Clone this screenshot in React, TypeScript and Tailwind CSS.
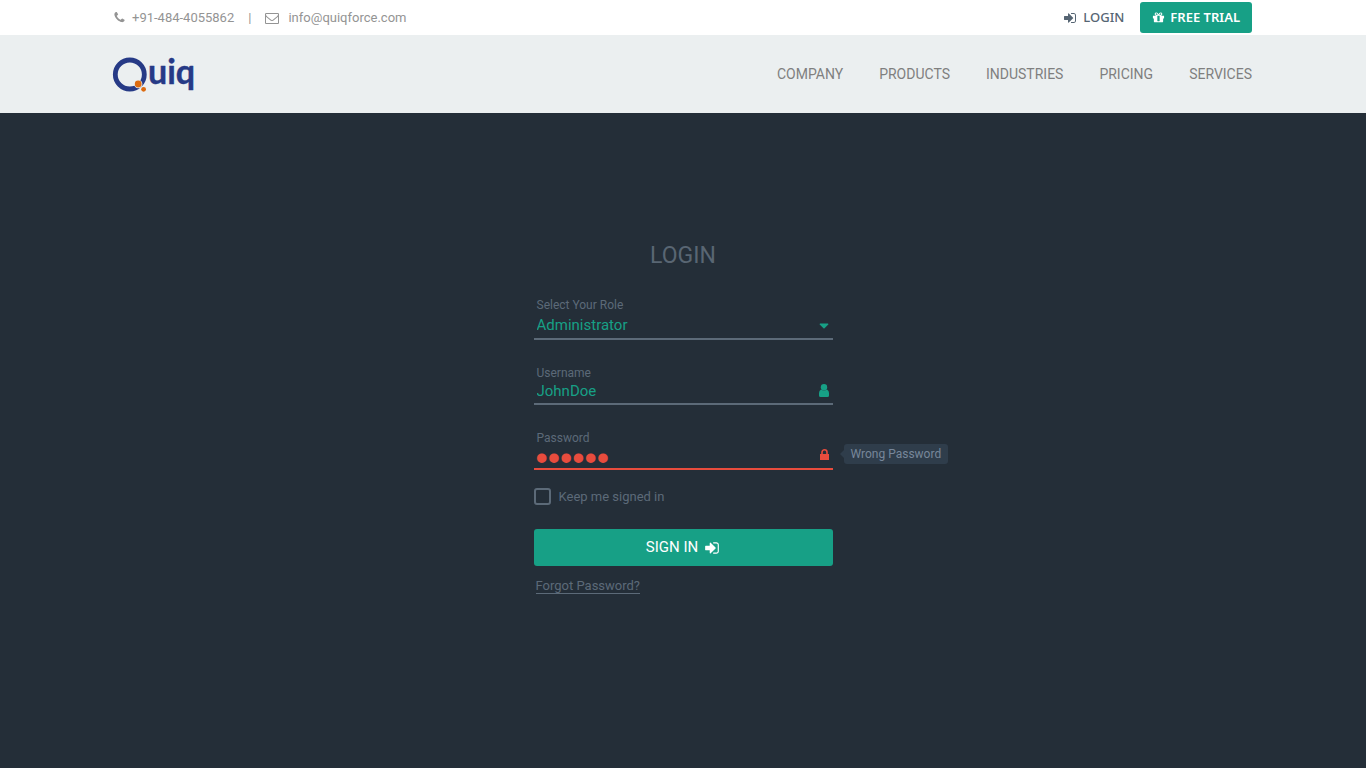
import React from "react";

type IconProps = { path: string; className: string };

function Icon({ path, className }: IconProps) {
  return (
    <svg viewBox="0 0 1792 1792" fill="currentColor" aria-hidden="true" className={className}>
      <path d={path} />
    </svg>
  );
}

const PHONE =
  "M1600 1240q0 27-10 70.5t-21 68.5q-21 50-122 106-94 51-186 51-27 0-53-3.5t-57.5-12.5-47-14.5-55.5-20.5-49-18q-98-35-175-83-127-79-264-216t-216-264q-48-77-83-175-3-9-18-49t-20.5-55.5-14.5-47-12.5-57.5-3.5-53q0-92 51-186 56-101 106-122 25-11 68.5-21t70.5-10q14 0 21 3 18 6 53 76 11 19 30 54t35 63.5 31 53.5q3 4 17.5 25t21.5 35.5 7 28.5q0 20-28.5 50t-62 55-62 53-28.5 46q0 9 5 22.5t8.5 20.5 14 24 11.5 19q76 137 174 235t235 174q2 1 19 11.5t24 14 20.5 8.5 22.5 5q18 0 46-28.5t53-62 55-62 50-28.5q14 0 28.5 7t35.5 21.5 25 17.5q25 15 53.5 31t63.5 35 54 30q70 35 76 53 3 7 3 21z";
const ENVELOPE =
  "M1664 1504v-768q-32 36-69 66-268 206-426 338-51 43-83 67t-86.5 48.5-102.5 24.5h-2q-48 0-102.5-24.5t-86.5-48.5-83-67q-158-132-426-338-37-30-69-66v768q0 13 9.5 22.5t22.5 9.5h1472q13 0 22.5-9.5t9.5-22.5zm0-1051v-24.5l-.5-13-3-12.5-5.5-9-9-7.5-14-2.5h-1472q-13 0-22.5 9.5t-9.5 22.5q0 168 147 284 193 152 401 317 6 5 35 29.5t46 37.5 44.5 31.5 50.5 27.5 43 9h2q20 0 43-9t50.5-27.5 44.5-31.5 46-37.5 35-29.5q208-165 401-317 54-43 100.5-115.5t46.5-131.5zm128-37v1088q0 66-47 113t-113 47h-1472q-66 0-113-47t-47-113v-1088q0-66 47-113t113-47h1472q66 0 113 47t47 113z";
const SIGN_IN =
  "M1312 896q0 26-19 45l-544 544q-19 19-45 19t-45-19-19-45v-288h-448q-26 0-45-19t-19-45v-384q0-26 19-45t45-19h448v-288q0-26 19-45t45-19 45 19l544 544q19 19 19 45zm352-352v704q0 119-84.5 203.5t-203.5 84.5h-320q-13 0-22.5-9.5t-9.5-22.5q0-4-1-20t-.5-26.5 3-23.5 10-19.5 20.5-6.5h320q66 0 113-47t47-113v-704q0-66-47-113t-113-47h-312l-11.5-1-11.5-3-8-5.5-7-9-2-13.5q0-4-1-20t-.5-26.5 3-23.5 10-19.5 20.5-6.5h320q119 0 203.5 84.5t84.5 203.5z";
const GIFT =
  "M1055 1356v-716h-320v716q0 25 18 38.5t46 13.5h192q28 0 46-13.5t18-38.5zm-456-844h195l-126-161q-26-31-69-31-40 0-68 28t-28 68 28 68 68 28zm688-96q0-40-28-68t-68-28q-43 0-69 31l-125 161h194q40 0 68-28t28-68zm376 256v320q0 14-9 23t-23 9h-96v416q0 40-28 68t-68 28h-1088q-40 0-68-28t-28-68v-416h-96q-14 0-23-9t-9-23v-320q0-14 9-23t23-9h440q-93 0-158.5-65.5t-65.5-158.5 65.5-158.5 158.5-65.5q107 0 168 77l128 165 128-165q61-77 168-77 93 0 158.5 65.5t65.5 158.5-65.5 158.5-158.5 65.5h440q14 0 23 9t9 23z";

function Logo() {
  return (
    <svg viewBox="0 0 88 48" className="h-12 w-[88px] overflow-visible" role="img" aria-label="Quiq">
      <circle cx="16.800" cy="24.500" r="14.500" fill="none" stroke="#263a86" strokeWidth="4.800" />
      <text
        x="35"
        y="34"
        fill="#263a86"
        stroke="#263a86"
        strokeWidth="0.4"
        strokeLinejoin="round"
        className="font-['Lato',sans-serif] text-[34px] font-bold leading-none"
      >
        uiq
      </text>
      <circle cx="25.200" cy="34" r="4.200" fill="#ebeff0" />
      <circle cx="25.200" cy="34" r="3.400" fill="#dc6b10" />
      <circle cx="30.600" cy="39.300" r="3.200" fill="#ebeff0" />
      <circle cx="30.600" cy="39.300" r="2.400" fill="#dc6b10" />
    </svg>
  );
}

const NAV = ["Company", "Products", "Industries", "Pricing", "Services"];
const LABEL = "block text-xs leading-4 px-[3px] text-[#5c6a78]";

export default function App() {
  return (
    <div className="flex min-h-screen flex-col bg-[#242e38] font-['Roboto',sans-serif]">
      <div className="bg-white">
        <div className="mx-auto flex h-[35px] max-w-[1140px] items-center justify-between pr-px">
          <div className="flex items-center text-[13px] text-[#949494]">
            <a href="tel:+914844055862" className="flex items-center gap-[6px]">
              <Icon path={PHONE} className="size-[13px]" />
              +91-484-4055862
            </a>
            <span className="mx-[14px]">|</span>
            <a href="mailto:info@quiqforce.com" className="flex items-center gap-[9px]">
              <Icon path={ENVELOPE} className="size-[14px]" />
              info@quiqforce.com
            </a>
          </div>
          <div className="flex items-center gap-4 font-['Noto_Sans',sans-serif] text-[13px]">
            <a href="#login" className="flex items-center gap-[6px] font-medium text-[#566573]">
              <Icon path={SIGN_IN} className="size-[14px]" />
              LOGIN
            </a>
            <a
              href="#trial"
              className="flex h-[31px] items-center gap-[5px] rounded-[3px] bg-[#17a086] px-3 font-semibold text-white"
            >
              <Icon path={GIFT} className="size-[13px]" />
              FREE TRIAL
            </a>
          </div>
        </div>
      </div>

      <header className="bg-[#ebeff0]">
        <div className="mx-auto flex h-[78px] max-w-[1140px] items-center justify-between pr-px">
          <a href="#home">
            <Logo />
          </a>
          <nav className="flex gap-9 text-sm uppercase text-[#7f7f7f]">
            {NAV.map((item) => (
              <a key={item} href={"#" + item.toLowerCase()}>
                {item}
              </a>
            ))}
          </nav>
        </div>
      </header>

      <main className="mx-auto w-[299px] pt-[127px]">
        <h1 className="text-center text-[23px] font-normal leading-8 text-[#596673]">
          LOGIN
        </h1>
        <form className="pt-[25px]" onSubmit={(e) => e.preventDefault()}>
          <label htmlFor="role" className={LABEL}>
            Select Your Role
          </label>
          <div className="flex items-center border-b-2 border-[#5c6a78] pr-1 text-[#17a086]">
            <select
              id="role"
              className="h-[25px] grow appearance-none bg-transparent pl-[3px] text-[15px] outline-none"
            >
              <option>Administrator</option>
            </select>
            <svg viewBox="0 0 10 6" fill="currentColor" aria-hidden="true" className="h-[6px] w-[10px] shrink-0">
              <path d="M1 .5h8l.5.8L5.500 5.300Q5 5.700 4.500 5.300L.5 1.300z" />
            </svg>
          </div>

          <label htmlFor="username" className={LABEL + " mt-[25px]"}>
            Username
          </label>
          <div className="flex items-center border-b-2 border-[#5c6a78] pr-1 text-[#17a086]">
            <input
              id="username"
              type="text"
              defaultValue="JohnDoe"
              className="h-[22px] min-w-0 grow bg-transparent pb-[2px] pl-[3px] text-[15px] outline-none"
            />
            <svg viewBox="0 0 10 13" fill="currentColor" aria-hidden="true" className="mb-[3px] h-[13px] w-[10px] shrink-0">
              <circle cx="5" cy="3.200" r="3.200" />
              <path d="M2 5.500Q5 7.500 8 5.500 10 6.500 10 9v2.500Q10 13 8.500 13h-7Q0 13 0 11.500V9Q0 6.500 2 5.500z" />
            </svg>
          </div>

          <label htmlFor="password" className={LABEL + " mt-[25px]"}>
            Password
          </label>
          <div className="relative flex items-center border-b-2 border-[#e84c3d] pr-1 text-[#e84c3d]">
            <input
              id="password"
              type="password"
              defaultValue="secret"
              aria-describedby="password-error"
              className="h-[22px] min-w-0 grow bg-transparent pl-[2px] pt-[2px] font-['Liberation_Sans',sans-serif] text-[35px] outline-none"
            />
            <svg viewBox="0 0 9 11" aria-hidden="true" className="mb-[5px] h-[11px] w-[9px] shrink-0">
              <path d="M2 6V3.300a2.500 2.500 0 0 1 5 0V6" fill="none" stroke="currentColor" strokeWidth="1.600" />
              <path d="M0 5h9v6H0z" fill="currentColor" />
            </svg>
            <div
              id="password-error"
              role="alert"
              className="absolute -top-[2px] left-full ml-[7px] flex items-center whitespace-nowrap text-xs text-[#77879a]"
            >
              <svg viewBox="0 0 4 8" aria-hidden="true" className="h-2 w-1">
                <path d="M4 0v8L0 4z" fill="#2f3d4b" />
              </svg>
              <span className="rounded-[3px] bg-[#2f3d4b] px-[7px] leading-5">Wrong Password</span>
            </div>
          </div>

          <label className="mt-[18px] flex items-center gap-2 text-[13px] leading-[17px] text-[#5c6a78]">
            <input
              type="checkbox"
              className="size-[17px] appearance-none rounded-[3px] border-2 border-[#5c6a78] checked:bg-[#17a086]"
            />
            Keep me signed in
          </label>

          <button
            type="submit"
            className="mt-6 flex h-[37px] w-full items-center justify-center gap-[6px] rounded-[3px] bg-[#17a086] text-[15px] text-white"
          >
            SIGN IN
            <Icon path={SIGN_IN} className="size-4" />
          </button>
          <a
            href="#forgot"
            className="ml-[2px] mt-3 inline-block border-b border-[#5c6a78] text-[13px] leading-[15px] text-[#5c6a78]"
          >
            Forgot Password?
          </a>
        </form>
      </main>
    </div>
  );
}
